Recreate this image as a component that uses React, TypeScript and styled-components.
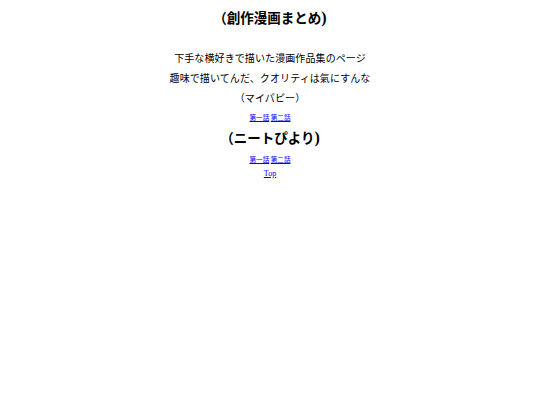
import React from 'react';
import styled, { createGlobalStyle } from 'styled-components';

const episodes: Array<string> = ['第一話', '第二話'];

const GlobalStyle = createGlobalStyle`
    body {
        margin: 0;
        background: #ffffff;
        color: #000000;
        font-family: "Liberation Serif", "Noto Sans CJK JP", serif;
    }
`;

const EpisodeLinks = () => (
    <LinkRow>
        {episodes.map((name, index) => (
            <React.Fragment key={index}>
                {index > 0 && ' '}
                <Link href="#">{name}</Link>
            </React.Fragment>
        ))}
    </LinkRow>
);

const App = () => {
    return (
        <Page>
            <GlobalStyle />
            <Title>
                （創作漫画まとめ<Paren>)</Paren>
            </Title>
            <Intro>
                <Line>下手な横好きで描いた漫画作品集のページ</Line>
                <Line>趣味で描いてんだ、クオリティは氣にすんな</Line>
                <Line>（マイパピー）</Line>
            </Intro>
            <EpisodeLinks />
            <SubTitle>
                （ニートぴより<Paren>)</Paren>
            </SubTitle>
            <EpisodeLinks />
            <TopRow>
                <Link href="#">Top</Link>
            </TopRow>
        </Page>
    );
};

const Page = styled.div`
    display: flex;
    flex-direction: column;
    align-items: center;
    text-align: center;
    padding-top: 7px;
`;

const Title = styled.h1`
    margin: 0 0 20px;
    font-size: 13.5px;
    line-height: 20px;
    font-weight: bold;
    font-family: "Noto Sans CJK JP", serif;
`;

const SubTitle = styled(Title)`
    margin: 1px 0 2px;
`;

const Paren = styled.span`
    font-family: "Liberation Serif", serif;
    font-size: 16px;
    font-weight: bold;
`;

const Intro = styled.div`
    display: flex;
    flex-direction: column;
`;

const Line = styled.p`
    margin: 0;
    font-size: 10px;
    line-height: 20px;
    letter-spacing: 0.1px;
    font-family: "Noto Sans CJK JP", sans-serif;
`;

const LinkRow = styled.div`
    font-size: 6.6px;
    line-height: 18px;
    font-family: "Noto Sans CJK JP", sans-serif;
`;

const TopRow = styled.div`
    margin-top: 1px;
    font-size: 8px;
    line-height: 10px;
    font-family: "Liberation Serif", serif;
`;

const Link = styled.a`
    color: #0000ee;
    text-decoration: underline;
`;

export default App;
